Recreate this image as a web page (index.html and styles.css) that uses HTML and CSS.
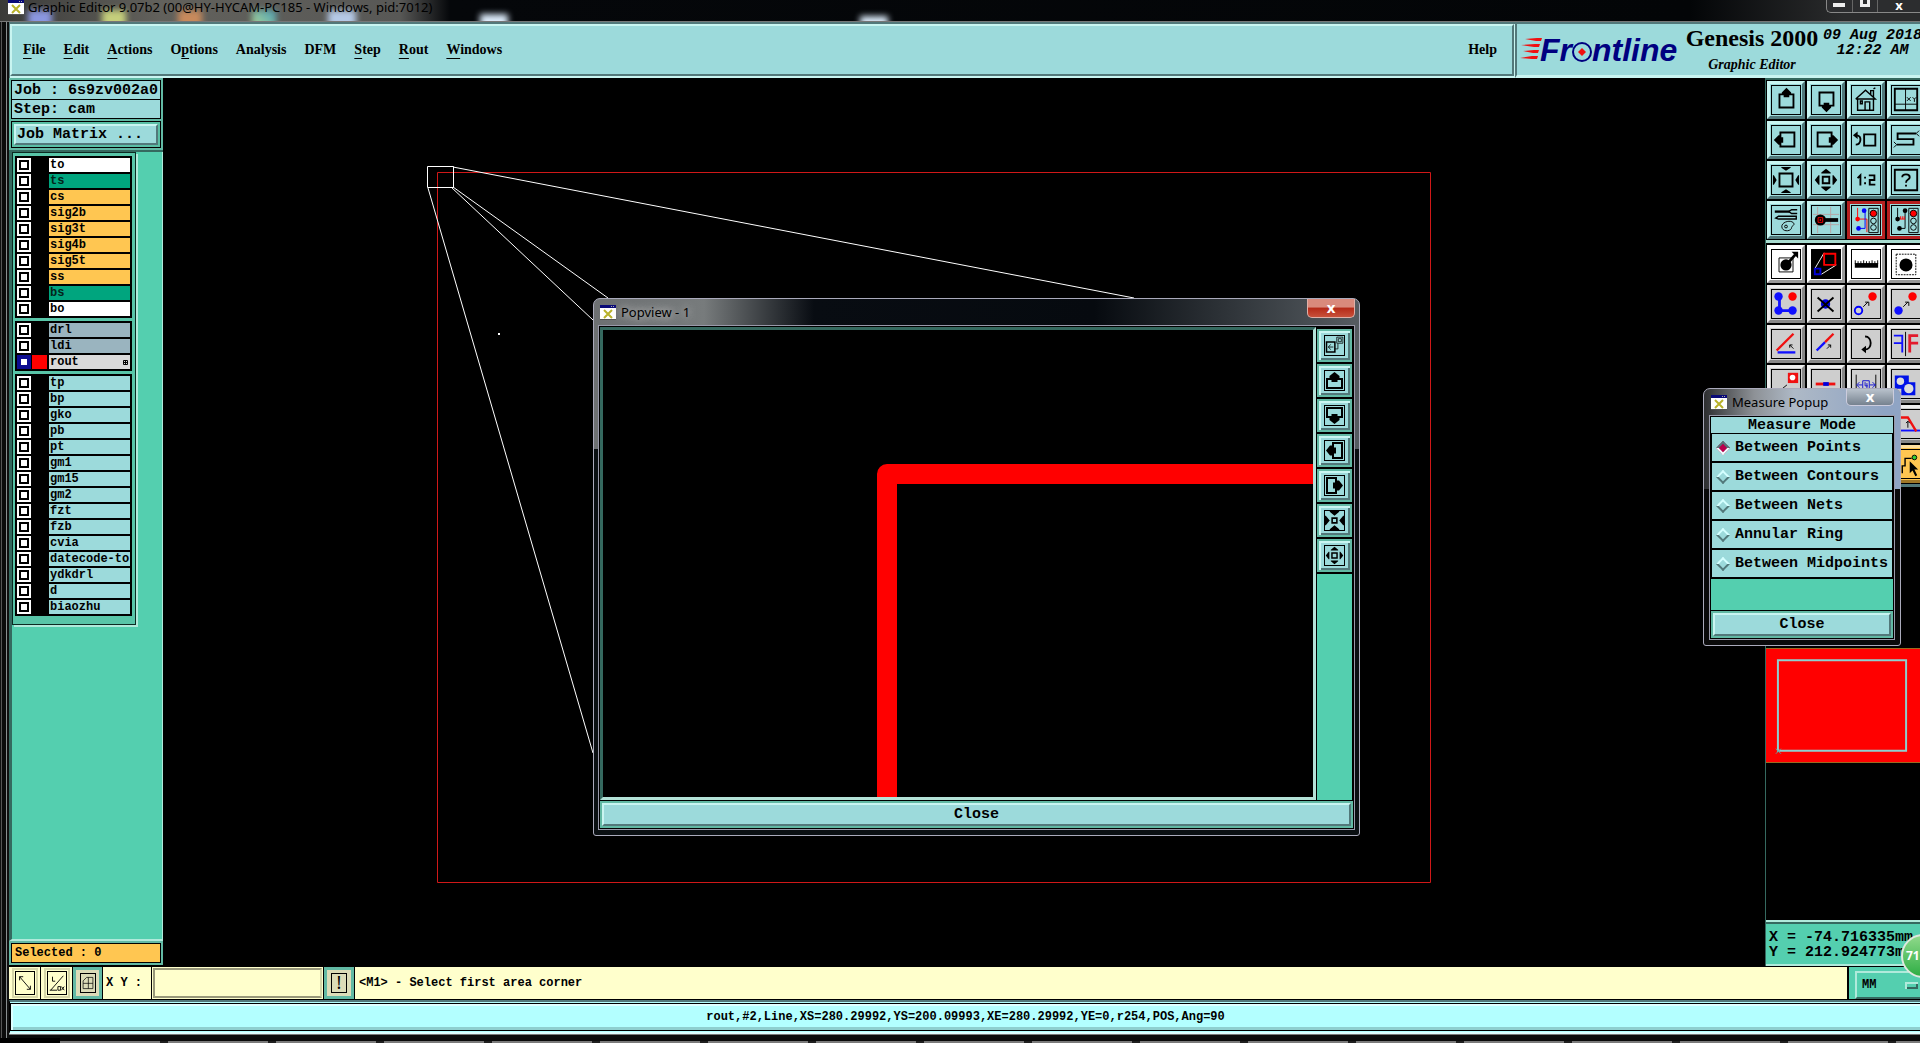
FILE: index.html
```html
<!DOCTYPE html>
<html lang="en">
<head>
<meta charset="utf-8">
<title>Graphic Editor</title>
<link rel="stylesheet" href="styles.css">
</head>
<body>
<svg class="defs" aria-hidden="true">
  <symbol id="app" viewBox="0 0 16 15"><path d="M0 0h16v15H0z" fill="#fff"/><path d="M0 0h16v3H0z" fill="#0a0a78"/><path d="M11 1h1v1h-1zM13 1h1v1h-1z" fill="#aaa"/><path d="M4 5l8 8M12 5l-8 8" stroke="#b9b22a" stroke-width="2"/><path d="M0 14.500h16" stroke="#555"/></symbol>
  <symbol id="up" viewBox="0 0 30 30"><path d="M8 9h15v14H8z" fill="none" stroke="#000" stroke-width="2"/><path d="M15.500 2l5 5v2h-2v3h-6V9h-2V7z"/></symbol>
  <symbol id="down" viewBox="0 0 30 30"><path d="M8 7h15v14H8z" fill="none" stroke="#000" stroke-width="2"/><path d="M15.500 28l5-5v-2h-2v-3h-6v3h-2v2z"/></symbol>
  <symbol id="left" viewBox="0 0 30 30"><path d="M9 7h15v15H9z" fill="none" stroke="#000" stroke-width="2"/><path d="M2 15l5-5h2v2h3v6H9v2H7z"/></symbol>
  <symbol id="right" viewBox="0 0 30 30"><path d="M6 7h15v15H6z" fill="none" stroke="#000" stroke-width="2"/><path d="M28 15l-5-5h-2v2h-3v6h3v2h2z"/></symbol>
  <symbol id="sup" viewBox="0 0 19 19"><path d="M2 8h15v9H2z" fill="none" stroke="#000" stroke-width="2"/><path d="M9.500 1l5 4v2h-2v4h-6V7h-2V5z"/></symbol>
  <symbol id="sdown" viewBox="0 0 19 19"><path d="M2 2h15v9H2z" fill="none" stroke="#000" stroke-width="2"/><path d="M9.500 18l5-4v-2h-2V8h-6v4h-2v2z"/></symbol>
  <symbol id="sleft" viewBox="0 0 19 19"><path d="M8 2h9v15H8z" fill="none" stroke="#000" stroke-width="2"/><path d="M1 9.500l4-5h2v2h4v6H7v2H5z"/></symbol>
  <symbol id="sright" viewBox="0 0 19 19"><path d="M2 2h9v15H2z" fill="none" stroke="#000" stroke-width="2"/><path d="M18 9.500l-4-5h-2v2H8v6h4v2h2z"/></symbol>
  <symbol id="home" viewBox="0 0 30 30"><path d="M6 13v13h17V13M4 14L14.500 4.500 25 14H4M20 9V5h3v7M14 26v-9h5v9M9 16h2v3H9zM23 3l2-1" fill="none" stroke="#000" stroke-width="1.500"/></symbol>
  <symbol id="xy" viewBox="0 0 30 30"><path d="M3 3h24v23H3z" fill="none" stroke="#000" stroke-width="2"/><path d="M14.500 3v23M3 19.500h24M16 12l4 4M20 12l-4 4M22 12l2 2 2-2M24 14v3" fill="none" stroke="#000"/></symbol>
  <symbol id="prev" viewBox="0 0 30 30"><path d="M13 9h12v12H13z" fill="none" stroke="#000" stroke-width="2"/><path d="M5 10c6 0 5 10-1 10" fill="none" stroke="#000" stroke-width="2"/><path d="M1 10l5-4v8z"/></symbol>
  <symbol id="snake" viewBox="0 0 30 30"><path d="M26 8H6v6h17v6H5" fill="none" stroke="#000" stroke-width="2"/><path d="M26 8l3-3M26 8l3 3M5 20l-3-3M5 20l-3 3" stroke="#000"/></symbol>
  <symbol id="fit" viewBox="0 0 30 30"><path d="M8 8h14v14H8z" fill="none" stroke="#000" stroke-width="2"/><path d="M15 5l-5-3V1h10v1zM15 25l-5 3v1h10v-1zM5 15l-3-5H1v10h1zM25 15l3-5h1v10h-1z"/></symbol>
  <symbol id="out" viewBox="0 0 30 30"><path d="M11.500 11.500h7v7h-7z" fill="none" stroke="#000" stroke-width="2"/><path d="M15 3l5 4v1H10V7zM15 27l5-4v-1H10v1zM3 15l4-5h1v10H7zM27 15l-4-5h-1v10h1z"/></symbol>
  <symbol id="in" viewBox="0 0 30 30"><path d="M12 12h6v6h-6z" fill="none" stroke="#000" stroke-width="2"/><path d="M15 9l-6-5V3h12v1zM15 21l-6 5v1h12v-1zM9 15L4 9H3v12h1zM21 15l5-6h1v12h-1z"/></symbol>
  <symbol id="pop" viewBox="0 0 30 30"><path d="M5 11h11v13H5z" fill="none" stroke="#000" stroke-width="2"/><path d="M18.500 4.500h8v8h-8zM20.500 6.500h4v4h-4zM16 20h4v-7M7 17.500h7M10.500 14l-3 3.500 3 3.500" fill="none" stroke="#000"/></symbol>
  <symbol id="one" viewBox="0 0 30 30"><path d="M6 13l3-3v11M13 12.500h2M13 18.500h2M18 10h6v5h-5v5h6" fill="none" stroke="#000" stroke-width="2"/></symbol>
  <symbol id="help" viewBox="0 0 30 30"><path d="M3 4h24v22H3z" fill="none" stroke="#000" stroke-width="2"/><path d="M11 12c0-4 8-4 8 0 0 3-4 2-4 6M15 20v2" fill="none" stroke="#000" stroke-width="2"/></symbol>
  <symbol id="tools" viewBox="0 0 30 30"><path d="M3 6h16" stroke="#000" stroke-width="2.500"/><path d="M27 4h-6l-3 2 3 2h6M4 13l3-2h19v3H7z" fill="none" stroke="#000" stroke-width="1.500"/><path d="M11 24c-3-6 8-10 12-6 2 3-2 3-2 5 0 4-8 5-10 1z" fill="none" stroke="#000"/><circle cx="15" cy="22" r="1.500" fill="none" stroke="#000"/><path d="M17 19h1M20 19h1"/></symbol>
  <symbol id="probe" viewBox="0 0 30 30"><path d="M6 1v28M20 1v28M1 9h28M1 20h28" stroke="#b9a3a3"/><circle cx="9" cy="15" r="6"/><path d="M14 15h14" stroke="#000" stroke-width="4"/><path d="M6.500 12.500h5v5h-5zM8.500 14.500h1v1h-1z" fill="none" stroke="#f00"/></symbol>
  <symbol id="net" viewBox="0 0 30 30"><path d="M6 2v12h10v14" fill="none" stroke="#f00"/><path d="M14 4v20H7" fill="none" stroke="#00f"/><circle cx="13" cy="5" r="2.500" fill="#00f"/><circle cx="6" cy="14" r="2.500" fill="#f00"/><circle cx="7" cy="24" r="2.500" fill="#00f"/><path d="M18 2.500h10v26H18z" fill="#9edbdb" stroke="#000"/><circle cx="23" cy="8" r="3.500" fill="#f00" stroke="#000"/><circle cx="23" cy="16" r="3" fill="#9edbdb" stroke="#000"/><circle cx="23" cy="23" r="3" fill="#9edbdb" stroke="#000"/></symbol>
  <symbol id="net2" viewBox="0 0 30 30"><path d="M6 2v12M14 4v20H7" fill="none" stroke="#000"/><path d="M8 14h6M9 14v-3M11 14v-3M13 14v-3" fill="none" stroke="#f00"/><circle cx="14" cy="5" r="2.500"/><circle cx="6" cy="14" r="2.500"/><circle cx="8" cy="24" r="2.500"/><path d="M18 2.500h10v26H18z" fill="#9edbdb" stroke="#000"/><circle cx="23" cy="8" r="3.500" fill="#f00" stroke="#000"/><circle cx="23" cy="16" r="3" fill="#9edbdb" stroke="#000"/><circle cx="23" cy="23" r="3" fill="#9edbdb" stroke="#000"/></symbol>
  <symbol id="sel" viewBox="0 0 30 30"><path d="M7.500 8.500h15v15h-15z" fill="none" stroke="#000"/><circle cx="15" cy="16" r="6"/><path d="M18 13l7-8" stroke="#000" stroke-width="3"/><path d="M28 2v7l-7-7z"/></symbol>
  <symbol id="popv" viewBox="0 0 30 30"><path d="M0 0h30v30H0z"/><path d="M13 3L3 20M26 16L10 26" stroke="#fff"/><path d="M13 4h12v12H13z" fill="none" stroke="#f00" stroke-width="2"/><path d="M3 20h6v6H3z" fill="none" stroke="#0000d8" stroke-width="2"/></symbol>
  <symbol id="ruler" viewBox="0 0 30 30"><path d="M3 14h25v5H3z"/><path d="M3.500 11v4M6.500 12v3M9.500 12v3M12.500 11v4M15.500 12v3M18.500 12v3M21.500 11v4M24.500 12v3M27.500 11v4" stroke="#000"/></symbol>
  <symbol id="dash" viewBox="0 0 30 30"><path d="M4.500 4.500h21v22h-21z" fill="none" stroke="#000" stroke-dasharray="2 1"/><circle cx="15" cy="16" r="7"/></symbol>
  <symbol id="chain" viewBox="0 0 30 30"><path d="M8 7v15h15" fill="none" stroke="#1010ff" stroke-width="3"/><g fill="#1010ff"><circle cx="7" cy="7" r="4.500"/><circle cx="7" cy="22" r="4.500"/><circle cx="22" cy="22" r="4.500"/></g><circle cx="22" cy="7" r="4.500" fill="#f00"/></symbol>
  <symbol id="del" viewBox="0 0 30 30"><circle cx="14.500" cy="15" r="5" fill="#00d"/><path d="M6 8l17 15M23 8L6 23" stroke="#000" stroke-width="2"/></symbol>
  <symbol id="move" viewBox="0 0 30 30"><circle cx="7" cy="22" r="4" fill="#d0d0d0" stroke="#00f" stroke-width="2"/><circle cx="22" cy="7" r="4.500" fill="#f00"/><path d="M12 18l5-5M14 13h4v4" fill="none" stroke="#000"/></symbol>
  <symbol id="copy" viewBox="0 0 30 30"><circle cx="7" cy="22" r="4.500" fill="#1010ff"/><circle cx="22" cy="7" r="4.500" fill="#f00"/><path d="M12 18l5-5M14 13h4v4" fill="none" stroke="#000"/></symbol>
  <symbol id="angle" viewBox="0 0 30 30"><path d="M5 22L23 4" stroke="#f01010" stroke-width="2.500"/><path d="M6 24h19" stroke="#1010ff" stroke-width="2.500"/><path d="M23 20l-4-4M19 19v-3h3" fill="none" stroke="#000"/></symbol>
  <symbol id="line" viewBox="0 0 30 30"><path d="M5 22l9-9" stroke="#1010ff" stroke-width="2.500"/><path d="M14 13l9-9" stroke="#f01010" stroke-width="2.500"/><path d="M16 20l4-4M17 16h3v3" fill="none" stroke="#000"/></symbol>
  <symbol id="rot" viewBox="0 0 30 30"><path d="M14 7c8 0 8 14 0 14h-2" fill="none" stroke="#000" stroke-width="2"/><path d="M10 21l5-4v8z"/></symbol>
  <symbol id="mirror" viewBox="0 0 30 30"><path d="M2 6h9v18M2 14h9" fill="none" stroke="#1010ff" stroke-width="2"/><path d="M14.500 2v26" stroke="#000"/><path d="M28 6h-9v18M19 14h9" fill="none" stroke="#e21a2c" stroke-width="3"/></symbol>
  <symbol id="resize" viewBox="0 0 30 30"><path d="M17 3h11v11H17z" fill="#f01010"/><circle cx="22" cy="8" r="3" fill="#fff"/><path d="M11 20l5-4" stroke="#000"/><path d="M2 21h12" stroke="#1010ff" stroke-width="3"/></symbol>
  <symbol id="bar" viewBox="0 0 30 30"><path d="M4 15h21" stroke="#f01010" stroke-width="3"/><path d="M12 15h6" stroke="#00d" stroke-width="4"/></symbol>
  <symbol id="gap" viewBox="0 0 30 30"><path d="M4.500 5v20M25.500 5v20" stroke="#000"/><path d="M6 16h5M19 16h6M11.500 11.500h7v9h-7zM8 13l-3 3 3 3M22 13l3 3-3 3" fill="none" stroke="#1010d0"/><path d="M14 13v4h3M16 14v6" fill="none" stroke="#1010d0"/></symbol>
  <symbol id="blocks" viewBox="0 0 30 30"><path d="M3 6h15v7h7v14H10v-7H3z" fill="#0012e8"/><circle cx="9" cy="12" r="4" fill="#ddd"/><circle cx="18" cy="20" r="5" fill="#ddd"/></symbol>
  <symbol id="step" viewBox="0 0 30 30"><path d="M0 22h30" stroke="#1010ff" stroke-width="2"/><path d="M1 8h16l9 15" fill="none" stroke="#f01010" stroke-width="2.500"/><path d="M17 19v-7M15 14l2-2 2 2" fill="none" stroke="#000"/></symbol>
  <symbol id="pick" viewBox="0 0 30 30"><path d="M11 25v-8h3V9h7" fill="none" stroke="#000" stroke-width="1.500"/><circle cx="24" cy="8" r="2.500" fill="#3c3" stroke="#000"/><path d="M19 12v13l3-3 3 6 2-1-3-6h4z"/></symbol>
  <symbol id="diag" viewBox="0 0 20 24"><path d="M4 5l12 14M4 9V5h4M16 15v4h-4" fill="none" stroke="#000"/></symbol>
  <symbol id="lox" viewBox="0 0 20 24"><path d="M3 20L17 4M2 20h8M5 5v5h3M11 16h3v4h-3zM15 16l3 4M18 16l-3 4" fill="none" stroke="#000"/></symbol>
  <symbol id="grid" viewBox="0 0 20 24"><path d="M3 9l5-5h9v16H3zM10.500 4v16M3 12.500h14" fill="none" stroke="#000"/></symbol>
</svg>

<div class="window">
  <header class="titlebar">
    <i class="glow blue"></i><i class="glow lime"></i><i class="glow orange"></i><i class="glow cyan"></i><i class="glow pale"></i><i class="glow white"></i><i class="glow far"></i>
    <svg class="appicon"><use href="#app"/></svg><span class="wintitle">Graphic Editor 9.07b2 (00@HY-HYCAM-PC185 - Windows, pid:7012)</span>
    <div class="winbtns"><button aria-label="Minimize"><i class="min"></i></button><button aria-label="Maximize"><i class="max"></i></button><button aria-label="Close window">x</button></div>
  </header>

  <div class="top">
    <nav class="menubar">
      <a href="#"><u>F</u>ile</a><a href="#"><u>E</u>dit</a><a href="#"><u>A</u>ctions</a><a href="#">O<u>p</u>tions</a><a href="#">Analysis</a><a href="#">DFM</a><a href="#"><u>S</u>tep</a><a href="#"><u>R</u>out</a><a href="#"><u>W</u>indows</a><a href="#" class="last">Help</a>
    </nav>
    <div class="brand">
      <div class="logo">
        <svg class="dashes" width="22" height="24" viewBox="0 0 22 24"><path d="M5 2l12-1h5l-1 3h-5zM1 8l14-1h5l-1 3h-5zM3 14l11-1h5l-1 3h-5zM0 21l12-2h6l-1 3h-5z" fill="#f01010"/></svg>
        <span class="logotext">Fr<svg class="target" width="20" height="20" viewBox="0 0 20 20"><circle cx="10" cy="10" r="9" fill="none" stroke="#000080" stroke-width="2"/><path d="M10 6l4 4-4 4-4-4z" fill="#f01010"/></svg>ntline</span>
      </div>
      <div class="product"><strong>Genesis 2000</strong><em>Graphic Editor</em></div>
      <div class="clock">09 Aug 2018<br>12:22 AM</div>
    </div>
  </div>

  <main class="main">
    <aside class="side">
      <div class="info">
        <div class="field">Job : 6s9zv002a0</div>
        <div class="field">Step: cam</div>
        <div class="matrix"><button class="motif">Job Matrix ...</button></div>
      </div>
      <div class="rest">
        <div class="layers">
          <div class="group">
            <label class="w"><input type="checkbox"><i></i><span>to</span></label>
            <label class="g"><input type="checkbox"><i></i><span>ts</span></label>
            <label class="o"><input type="checkbox"><i></i><span>cs</span></label>
            <label class="o"><input type="checkbox"><i></i><span>sig2b</span></label>
            <label class="o"><input type="checkbox"><i></i><span>sig3t</span></label>
            <label class="o"><input type="checkbox"><i></i><span>sig4b</span></label>
            <label class="o"><input type="checkbox"><i></i><span>sig5t</span></label>
            <label class="o"><input type="checkbox"><i></i><span>ss</span></label>
            <label class="g"><input type="checkbox"><i></i><span>bs</span></label>
            <label class="w"><input type="checkbox"><i></i><span>bo</span></label>
          </div>
          <div class="group">
            <label class="s"><input type="checkbox"><i></i><span>drl</span></label>
            <label class="s"><input type="checkbox"><i></i><span>ldi</span></label>
            <label class="l"><input type="checkbox" checked><i></i><span>rout<svg width="5" height="5" viewBox="0 0 5 5"><path d="M.5.5h4v4h-4zM2.500 0v5M0 2.500h5" fill="none" stroke="#000"/></svg></span></label>
          </div>
          <div class="group">
            <label><input type="checkbox"><i></i><span>tp</span></label>
            <label><input type="checkbox"><i></i><span>bp</span></label>
            <label><input type="checkbox"><i></i><span>gko</span></label>
            <label><input type="checkbox"><i></i><span>pb</span></label>
            <label><input type="checkbox"><i></i><span>pt</span></label>
            <label><input type="checkbox"><i></i><span>gm1</span></label>
            <label><input type="checkbox"><i></i><span>gm15</span></label>
            <label><input type="checkbox"><i></i><span>gm2</span></label>
            <label><input type="checkbox"><i></i><span>fzt</span></label>
            <label><input type="checkbox"><i></i><span>fzb</span></label>
            <label><input type="checkbox"><i></i><span>cvia</span></label>
            <label><input type="checkbox"><i></i><span>datecode-to</span></label>
            <label><input type="checkbox"><i></i><span>ydkdrl</span></label>
            <label><input type="checkbox"><i></i><span>d</span></label>
            <label><input type="checkbox"><i></i><span>biaozhu</span></label>
          </div>
        </div>
      </div>
      <div class="selwrap"><div class="selected">Selected : 0</div></div>
    </aside>

    <section class="canvas">
      <svg class="drawing" viewBox="0 0 1602 888" preserveAspectRatio="xMinYMin meet" fill="none" stroke-width="1">
        <path d="M274.500 94.500h993v710h-993z" stroke="#d01818"/>
        <path d="M264.500 88.500h26v21h-26z" stroke="#fff"/>
        <path d="M290 89L971 220M290 109L445 220M288 109L430 242M265 110L430 675" stroke="#fff"/>
        <path d="M335 255h2v2h-2z" fill="#fff"/>
      </svg>
    </section>

    <aside class="right">
      <div class="palette">
        <div class="tools">
          <button aria-label="Pan up"><svg><use href="#up"/></svg></button><button aria-label="Pan down"><svg><use href="#down"/></svg></button><button aria-label="Home"><svg><use href="#home"/></svg></button><button aria-label="Pan to XY"><svg><use href="#xy"/></svg></button>
          <button aria-label="Pan left"><svg><use href="#left"/></svg></button><button aria-label="Pan right"><svg><use href="#right"/></svg></button><button aria-label="Previous view"><svg><use href="#prev"/></svg></button><button aria-label="Serpentine"><svg><use href="#snake"/></svg></button>
          <button aria-label="Zoom in"><svg><use href="#fit"/></svg></button><button aria-label="Zoom out"><svg><use href="#out"/></svg></button><button aria-label="Zoom one to two"><svg><use href="#one"/></svg></button><button aria-label="Help"><svg><use href="#help"/></svg></button>
          <button aria-label="Setup"><svg><use href="#tools"/></svg></button><button aria-label="Snap"><svg><use href="#probe"/></svg></button><button class="red" aria-label="Nets"><svg><use href="#net"/></svg></button><button class="red" aria-label="Net check"><svg><use href="#net2"/></svg></button>
        </div>
        <div class="tools grey">
          <button class="on" aria-label="Select"><svg><use href="#sel"/></svg></button><button class="on" aria-label="Popview"><svg><use href="#popv"/></svg></button><button class="on" aria-label="Measure"><svg><use href="#ruler"/></svg></button><button class="on" aria-label="Area"><svg><use href="#dash"/></svg></button>
          <button aria-label="Chain"><svg><use href="#chain"/></svg></button><button aria-label="Delete"><svg><use href="#del"/></svg></button><button aria-label="Move"><svg><use href="#move"/></svg></button><button aria-label="Copy"><svg><use href="#copy"/></svg></button>
          <button aria-label="Angle"><svg><use href="#angle"/></svg></button><button aria-label="Line"><svg><use href="#line"/></svg></button><button aria-label="Rotate"><svg><use href="#rot"/></svg></button><button aria-label="Mirror"><svg><use href="#mirror"/></svg></button>
          <button aria-label="Resize"><svg><use href="#resize"/></svg></button><button aria-label="Join"><svg><use href="#bar"/></svg></button><button aria-label="Spacing"><svg><use href="#gap"/></svg></button><button aria-label="Merge"><svg><use href="#blocks"/></svg></button>
          <button aria-label="Break"><svg><use href="#bar"/></svg></button><button aria-label="Extend"><svg><use href="#line"/></svg></button><button aria-label="Corner"><svg><use href="#angle"/></svg></button><button aria-label="Shift line"><svg><use href="#step"/></svg></button>
          <button aria-label="Attach"><svg><use href="#copy"/></svg></button><button aria-label="Detach"><svg><use href="#move"/></svg></button><button aria-label="Trace"><svg><use href="#chain"/></svg></button><button class="gold" aria-label="Net pick"><svg><use href="#pick"/></svg></button>
        </div>
      </div>
      <div class="overview"><svg width="155" height="115" viewBox="0 0 155 115" fill="none"><path d="M12 11h129v91H12z" stroke="#8ecfcf" stroke-width="2"/><path d="M10 100l5 5M15 100l-5 5" stroke="#5aa"/></svg></div>
      <div class="coords">X = -74.716335mm<br>Y = 212.924773mm</div>
    </aside>
  </main>

  <form class="command">
    <button type="button" class="flat" aria-label="Diagonal"><svg><use href="#diag"/></svg></button>
    <button type="button" class="flat" aria-label="Snap angle"><svg><use href="#lox"/></svg></button>
    <button type="button" class="raised" aria-label="Grid"><svg><use href="#grid"/></svg></button>
    <label for="xy-input">X Y :</label>
    <input id="xy-input" type="text">
    <button type="button" class="raised bang"><span>!</span></button>
    <output>&lt;M1&gt; - Select first area corner</output>
    <div class="unit"><select aria-label="Units"><option>MM</option><option>INCH</option></select></div>
  </form>
  <footer class="status"><div>rout,#2,Line,XS=280.29992,YS=200.09993,XE=280.29992,YE=0,r254,POS,Ang=90</div></footer>
  <div class="edge"></div>
</div>
<div class="desk"></div>
<div class="ball">71</div>

<section class="popup popview">
  <header><svg class="appicon"><use href="#app"/></svg><h2>Popview - 1</h2><button class="closex" aria-label="Close Popview">x</button></header>
  <div class="inner">
    <div class="view">
      <div class="viewport"><svg viewBox="0 0 710 467" preserveAspectRatio="xMinYMin slice"><path d="M284 480V144h430" fill="none" stroke="#f00" stroke-width="20" stroke-linejoin="round"/></svg></div>
      <div class="strip">
        <button aria-label="New popview"><svg viewBox="3 3 25 25"><use href="#pop" width="30" height="30"/></svg></button>
        <button aria-label="Up"><svg><use href="#sup"/></svg></button>
        <button aria-label="Down"><svg><use href="#sdown"/></svg></button>
        <button aria-label="Left"><svg><use href="#sleft"/></svg></button>
        <button aria-label="Right"><svg><use href="#sright"/></svg></button>
        <button aria-label="Zoom in"><svg viewBox="3 3 24 24"><use href="#in" width="30" height="30"/></svg></button>
        <button aria-label="Zoom out"><svg viewBox="2 2 26 26"><use href="#out" width="30" height="30"/></svg></button>
      </div>
    </div>
    <div class="closebar"><button class="motif">Close</button></div>
  </div>
</section>

<section class="popup measure">
  <header><svg class="appicon"><use href="#app"/></svg><h2>Measure Popup</h2><button class="closex" aria-label="Close Measure">x</button></header>
  <div class="inner">
    <h3>Measure Mode</h3>
    <label><input type="radio" name="mode" checked>Between Points</label>
    <label><input type="radio" name="mode">Between Contours</label>
    <label><input type="radio" name="mode">Between Nets</label>
    <label><input type="radio" name="mode">Annular Ring</label>
    <label><input type="radio" name="mode">Between Midpoints</label>
    <div class="blank"></div>
    <div class="closebar"><button class="motif">Close</button></div>
  </div>
</section>
</body>
</html>
```
FILE: styles.css
```css
:root {
  --aqua: #9cdadb;
  --teal: #54cfaf;
  --deep: #35695f;
  --lite: #c9f5f1;
  --shade: #52787a;
  --cream: #ffffcc;
  --orange: #ffc651;
  --mono: "Liberation Mono", "Courier New", monospace;
  --serif: "Liberation Serif", "Times New Roman", serif;
  --sans: "Noto Sans", "Open Sans", sans-serif;
}
* { box-sizing: border-box; }
body { margin: 0; background: #000; height: 100vh; overflow: hidden; position: relative; display: flex; flex-direction: column; color: #000; }
button, input, select { font: inherit; color: inherit; padding: 0; margin: 0; border-radius: 0; }
.defs { position: absolute; width: 0; height: 0; }
.appicon { width: 16px; height: 15px; flex: none; }

.window { flex: 1; min-height: 0; display: flex; flex-direction: column; padding-left: 9px; background: linear-gradient(90deg, #111 0 1px, #555 1px 2px, #0b0b0b 2px 6px, #8a8f90 6px 7px, #101010 7px 9px, #000 9px); }

/* title bar */
.titlebar { height: 22px; flex: none; display: flex; align-items: flex-start; position: relative; overflow: hidden; margin-left: -9px; padding-left: 8px; background: linear-gradient(90deg, #3a3a38, #62615c 160px, #585856 400px, #05070a 450px, #030507 88%, #2a2b2c 96%); border-bottom: 1px solid #777; }
.titlebar .appicon { position: relative; }
.wintitle { position: relative; font: 13px/18px var(--sans); margin: -2px 0 0 4px; white-space: nowrap; }
.glow { position: absolute; top: 10px; width: 24px; height: 20px; filter: blur(3px); }
.blue { left: 28px; background: #8b97e0; }
.lime { left: 102px; background: #c5cf7c; }
.orange { left: 178px; background: #c88a5c; }
.cyan { left: 252px; background: linear-gradient(45deg, #b4d890, #4aa0b8); }
.pale { left: 328px; background: #b5c9e6; width: 28px; }
.white { left: 480px; top: 14px; background: #dcebfa; width: 28px; }
.far { left: 860px; top: 16px; background: #dcebfa; width: 28px; }
.winbtns { display: flex; position: absolute; right: 0; top: 0; height: 13px; width: 94px; border: 1px solid #888; border-top: 0; border-right: 0; border-radius: 0 0 0 5px; overflow: hidden; background: #2c2d2f; }
.winbtns button { border: 0; border-right: 1px solid #666; background: none; width: 28px; color: #fff; font: bold 13px/10px var(--sans); display: flex; justify-content: center; }
.winbtns button:last-child { width: 46px; border: 0; }
.min { width: 12px; height: 4px; background: #eee; margin-top: 3px; }
.max { width: 10px; height: 7px; border: 3px solid #eee; border-top: 0; }

/* menu and brand */
.top { height: 56px; flex: none; display: flex; background: var(--shade); border-top: 2px solid var(--shade); font-family: var(--serif); font-weight: bold; font-size: 14px; }
.menubar { flex: 1; display: flex; align-items: center; gap: 18px; padding: 0 15px 0 11px; margin: 0 1px; background: var(--aqua); border: 2px solid; border-color: var(--lite) var(--shade) var(--shade) var(--lite); box-shadow: 0 2px var(--lite); margin-bottom: 2px; }
.menubar a { color: #000; text-decoration: none; line-height: 18px; }
.menubar u { text-underline-offset: 4px; }
.last { margin-left: auto; }
.brand { width: 405px; flex: none; display: flex; background: var(--aqua); border-left: 2px solid var(--shade); border-bottom: 3px solid var(--lite); box-shadow: -1px 0 var(--lite); white-space: nowrap; overflow: hidden; }
.logo { display: flex; padding: 12px 0 0 3px; width: 164px; flex: none; }
.dashes { flex: none; margin-top: 1px; }
.logotext { font: italic bold 32px/28px "Liberation Sans", Arial, sans-serif; color: #000080; display: flex; align-items: flex-start; margin-left: -2px; }
.target { margin-top: 6px; flex: none; }
.product { width: 142px; flex: none; display: flex; flex-direction: column; align-items: center; }
.product strong { font-size: 24px; line-height: 28px; }
.product em { font-size: 14px; line-height: 20px; margin-top: 3px; }
.clock { font: italic bold 15px/15px var(--mono); text-align: center; padding-top: 4px; }

/* main area */
.main { flex: 1; min-height: 0; display: flex; }
.side { width: 154px; flex: none; display: flex; flex-direction: column; background: var(--teal); font: bold 12px/14px var(--mono); margin-bottom: 1px; }
.info { padding: 2px; background: #62b9a4; border-bottom: 2px solid var(--deep); }
.field, .matrix { border: 1px solid #000; background: var(--aqua); }
.field { height: 20px; font: bold 15px/20px var(--mono); padding-left: 2px; margin-bottom: -1px; white-space: nowrap; }
.matrix { background: #5abfa5; height: 27px; margin-top: 3px; padding: 2px; display: flex; }
.motif { flex: 1; border: 2px solid; border-color: var(--lite) var(--shade) var(--shade) var(--lite); background: var(--aqua); font: bold 15px/20px var(--mono); }
.matrix .motif { text-align: left; padding-left: 1px; line-height: 18px; }
.rest { flex: 1; border-left: 3px solid var(--deep); border-right: 1px solid #b0eadb; border-bottom: 2px solid #b0eadb; }
.layers { width: 124px; height: 473px; padding: 3px 3px 0 2px; border: 1px solid #0b2a22; box-shadow: 2px 2px #b0eadb; display: flex; flex-direction: column; gap: 3px; background: #58c5a8; }
.group { background: #000; padding: 1px 2px; }
.group label { height: 16px; display: flex; align-items: center; gap: 1px; }
.group input { appearance: none; flex: none; width: 14px; height: 14px; background: linear-gradient(#fff, #fff) center/6px 6px no-repeat, linear-gradient(#000, #000) center/10px 10px no-repeat, #fff; }
.group input:checked { background: linear-gradient(#fff, #fff) center/6px 6px no-repeat, #0c0c90; }
.group i { width: 15px; height: 14px; flex: none; }
.group input:checked + i { background: #f00; }
.group span { flex: 1; height: 14px; line-height: 15px; margin-left: 1px; padding-left: 1px; background: var(--aqua); display: flex; justify-content: space-between; align-items: center; white-space: nowrap; }
.group .w span { background: #fff; }
.group .g span { background: #00a57e; color: #04241b; }
.group .o span { background: var(--orange); }
.group .s span { background: #9ab4bf; }
.group .l span { background: #dadada; padding-right: 2px; }
.selwrap { padding: 2px; background: #62b9a4; }
.selected { border: 1px solid #000; background: var(--orange); height: 20px; line-height: 18px; padding-left: 3px; }
.canvas { flex: 1; background: #000; position: relative; overflow: hidden; }
.drawing { position: absolute; left: 0; top: 0; width: 100%; }
.right { width: 155px; flex: none; overflow: hidden; display: flex; flex-direction: column; border-left: 1px solid var(--deep); }
.palette { width: 162px; border-top: 2px solid var(--deep); flex: none; }
.tools { display: grid; grid-template-columns: repeat(4, 38px); gap: 2px; padding: 1px; border-bottom: 3px solid #a8dcd0; }
.tools.grey { padding-top: 2px; border-color: var(--shade); }
.tools button { width: 38px; height: 38px; border: 3px solid; border-color: var(--lite) var(--shade) var(--shade) var(--lite); background: var(--aqua); padding: 1px; display: flex; }
.tools svg { width: 30px; height: 30px; border: 1px solid #000; flex: none; }
.tools.grey button { background: #cecece; border-color: #eee #888 #888 #eee; }
.tools.grey .on { background: #fff; border-color: #fff #999 #999 #fff; }
.tools .red { border-color: #b52020; }
.tools.grey .gold { background: var(--orange); border-color: #ffe0a0 #a07828 #a07828 #ffe0a0; }
.overview { height: 115px; flex: none; margin: 161px 0 auto; background: #f00; border-top: 1px solid #9a6a20; border-bottom: 1px solid #9a6a20; display: flex; }
.coords { height: 46px; flex: none; border-top: 2px solid #b0eadb; border-bottom: 2px solid #b0eadb; background: var(--teal); box-shadow: inset 0 2px var(--deep); font: bold 15px/15px var(--mono); padding: 8px 0 0 3px; white-space: nowrap; }

/* command row */
.command { height: 34px; flex: none; display: flex; background: #000; font: bold 12px/33px var(--mono); border: solid #000; border-width: 1px 0; }
.command button { width: 31px; flex: none; background: var(--cream); border: 2px solid var(--cream); margin-right: 1px; display: flex; align-items: center; justify-content: center; padding: 0; }
.command button svg, .bang span { width: 20px; height: 24px; border: 1px solid #000; outline: 2px solid #d6d6a8; outline-offset: 1px; }
.bang span { width: 16px; height: 20px; font: 18px/17px var(--sans); outline: 0; }
.command .raised { width: 29px; background: #dcdcb8; border: 3px solid #62b9a4; }
.command .raised svg { width: 16px; height: 20px; outline: 0; }
.command .bang { width: 30px; margin-left: 1px; }
.command label { width: 48px; flex: none; padding-left: 3px; background: var(--cream); white-space: nowrap; }
.command input { width: 171px; flex: none; margin-left: 1px; border: 3px solid; border-color: #98987a #d6d6a8 #98987a #98987a; background: var(--cream); padding: 0 4px; outline: 1px solid var(--cream); outline-offset: -1px; }
.command output { flex: 1; background: var(--cream); padding-left: 4px; }
.unit { width: 71px; flex: none; margin-left: 2px; background: var(--teal); padding: 2px 0 2px 6px; overflow: hidden; }
.unit select { appearance: none; width: 80px; height: 28px; border: 2px solid; border-color: #b0eadb var(--deep) var(--deep) #b0eadb; background: linear-gradient(var(--teal), var(--teal)) 50px 11px/9px 3px no-repeat, linear-gradient(var(--deep), var(--deep)) 50px 11px/11px 5px no-repeat, linear-gradient(#b0eadb, #b0eadb) 48px 9px/13px 7px no-repeat, var(--teal); padding-left: 5px; font: bold 12px/22px var(--mono); }
.status { height: 34px; flex: none; border: solid; border-width: 2px 0 2px 1px; border-color: var(--shade) #000 #dff; background: #b3ffff; padding: 1px 0; font: bold 12px/20px var(--mono); text-align: center; }
.status div { border: solid; border-width: 1px 0 1px 1px; height: 28px; border-color: #000; box-shadow: inset 2px 2px #dff, inset 0 -3px #8fcfcf; padding-top: 3px; }
.edge { height: 4px; flex: none; background: #0a0c0c; border-top: 1px solid #777; }
.desk { height: 5px; flex: none; background: repeating-linear-gradient(90deg, #ccc 0 100px, #333 100px 108px); border-top: 3px solid #111; margin-left: 60px; opacity: .6; }
.ball { position: absolute; left: calc(100% - 19px); bottom: 65px; width: 44px; height: 44px; border-radius: 50%; border: 2px solid #dfe8df; background: linear-gradient(#8fd98a, #2fae45); color: #fff; font: bold 12px/40px var(--sans); padding-left: 3px; }

/* floating windows */
.popup { position: absolute; border: 1px solid #aab; border-radius: 7px 7px 3px 3px; padding: 0 4px 5px; display: flex; flex-direction: column; }
.popup header { display: flex; align-items: center; height: 26px; flex: none; padding-left: 2px; position: relative; }
.popup h2 { font: 13px/20px var(--sans); margin: 0 0 0 5px; }
.popup .inner { flex: 1; display: flex; flex-direction: column; border: 1px solid #99a; padding: 1px; background: #000; min-height: 0; }
.closex { position: absolute; right: 0; top: 0; width: 48px; height: 19px; border: 1px solid #e0b0a8; border-top: 0; border-radius: 0 0 5px 5px; background: linear-gradient(#d98a7c 0 45%, #b52a18 50%, #c8503a); color: #fff; font: bold 15px/14px var(--sans); padding-bottom: 3px; }
.closebar { display: flex; background: #62b9a4; padding: 2px; border-top: 1px solid #000; }
.popview { left: 593px; top: 298px; width: 767px; height: 538px; background: linear-gradient(90deg, #6d7072, #777b7c 110px, #080c12 220px, #060a0f 500px, #555b60 760px) top/100% 150px no-repeat, #0a0f12; }
.popview h2 { text-shadow: 0 0 8px #ccc, 0 0 8px #aaa; }
.view { flex: 1; display: flex; min-height: 0; }
.viewport { flex: 1; border: 3px solid; border-color: var(--deep) #b4e2d8 #b4e2d8 var(--deep); overflow: hidden; display: flex; }
.viewport svg { width: 100%; height: 100%; }
.strip { width: 37px; background: linear-gradient(#000 0 2px, var(--teal) 2px); border-left: 1px solid #000; border-right: 1px solid #000; padding-top: 2px; display: flex; flex-direction: column; }
.strip button { width: 35px; height: 35px; border: 0; border-bottom: 2px solid #000; background: var(--aqua); display: flex; align-items: center; justify-content: center; box-shadow: inset 2px 2px #62b9a4, inset -2px -2px #62b9a4, inset 4px 4px var(--lite), inset -4px -4px var(--shade); }
.strip svg { width: 21px; height: 21px; border: 1px solid #000; }
.popview .closebar { height: 28px; }
.measure { left: calc(100% - 217px); top: 388px; width: 198px; height: 258px; background: linear-gradient(90deg, #2d2e30, #8d9196 50px, #aeb9c6 90px, #8fa4c4 180px) top/100% 100px no-repeat, #0a0a0a; padding: 0 5px 5px; font: bold 15px/26px var(--mono); }
.measure h3 { font: inherit; line-height: 18px; height: 17px; margin: 0; text-align: center; background: var(--aqua); border: 1px solid #000; border-width: 0 0 1px; }
.measure label { height: 27px; line-height: 28px; margin: 0 1px 2px; display: flex; align-items: center; background: var(--aqua); padding-left: 6px; white-space: nowrap; }
.measure input { appearance: none; width: 10px; height: 10px; margin: 0 7px 0 0; transform: rotate(45deg); border: 2px solid; border-color: #d4ffff var(--shade) var(--shade) #d4ffff; flex: none; }
.measure input:checked { background: #b8004c; border-color: var(--shade) #eff #eff var(--shade); }
.blank { flex: 1; background: var(--teal); }
.measure .closebar { height: 28px; }
.measure .closex { background: linear-gradient(#b9c2cc, #76828f); border-color: #ccd; height: 17px; right: 1px; }
```
